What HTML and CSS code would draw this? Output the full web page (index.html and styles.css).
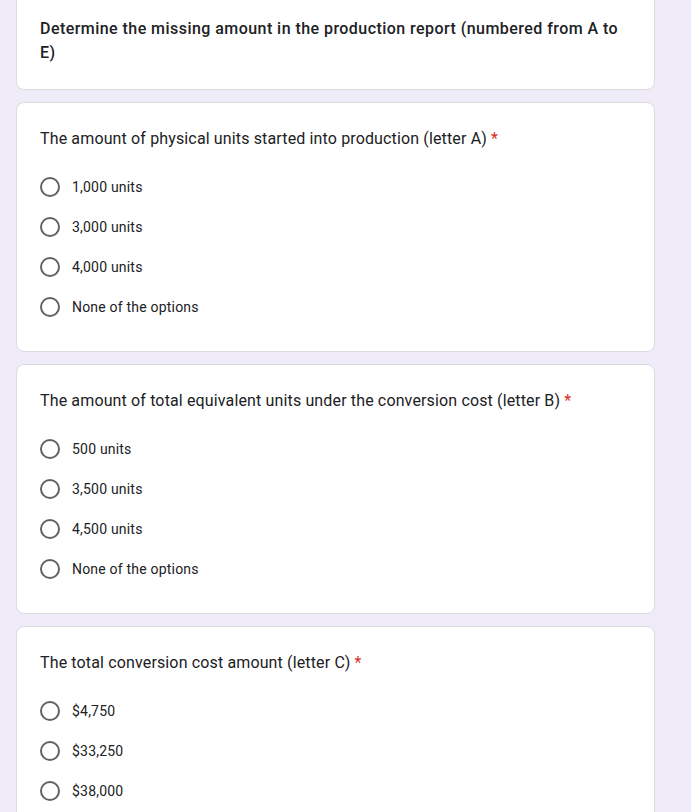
FILE: index.html
```html
<!DOCTYPE html>
<html>
<head>
<meta charset="utf-8">
<link rel="stylesheet" href="styles.css">
</head>
<body>
<div class="form">
  <div class="card card-section">
    <div class="section-title">Determine the missing amount in the production report (numbered from A to E)</div>
  </div>

  <div class="card">
    <div class="q-title">The amount of physical units started into production (letter A) <span class="req">*</span></div>
    <div class="options">
      <div class="opt"><span class="radio"></span><span class="label">1,000 units</span></div>
      <div class="opt"><span class="radio"></span><span class="label">3,000 units</span></div>
      <div class="opt"><span class="radio"></span><span class="label">4,000 units</span></div>
      <div class="opt"><span class="radio"></span><span class="label">None of the options</span></div>
    </div>
  </div>

  <div class="card">
    <div class="q-title">The amount of total equivalent units under the conversion cost (letter B) <span class="req">*</span></div>
    <div class="options">
      <div class="opt"><span class="radio"></span><span class="label">500 units</span></div>
      <div class="opt"><span class="radio"></span><span class="label">3,500 units</span></div>
      <div class="opt"><span class="radio"></span><span class="label">4,500 units</span></div>
      <div class="opt"><span class="radio"></span><span class="label">None of the options</span></div>
    </div>
  </div>

  <div class="card">
    <div class="q-title">The total conversion cost amount (letter C) <span class="req">*</span></div>
    <div class="options">
      <div class="opt"><span class="radio"></span><span class="label">$4,750</span></div>
      <div class="opt"><span class="radio"></span><span class="label">$33,250</span></div>
      <div class="opt"><span class="radio"></span><span class="label">$38,000</span></div>
    </div>
  </div>
</div>
</body>
</html>
```

FILE: styles.css
```css
html, body {
  margin: 0;
  padding: 0;
  background: #f0ebf8;
  font-family: Roboto, "Liberation Sans", Arial, sans-serif;
  color: #202124;
}

.form {
  width: 639px;
  margin: -8px 0 0 16px;
  display: flex;
  flex-direction: column;
  gap: 12px;
}

.card {
  background: #fff;
  border: 1px solid #dadce0;
  border-radius: 8px;
  padding: 24px 23px 24px 23px;
}

.section-title {
  font-size: 16px;
  line-height: 24px;
  font-weight: 500;
  letter-spacing: 0.45px;
}

.q-title {
  font-size: 16px;
  line-height: 24px;
  font-weight: 400;
  letter-spacing: 0.14px;
}

.req {
  color: #d93025;
}

.options {
  margin-top: 16px;
  display: flex;
  flex-direction: column;
}

.opt {
  display: flex;
  align-items: center;
  height: 40px;
  gap: 12px;
}

.radio {
  box-sizing: border-box;
  width: 20px;
  height: 20px;
  border: 2px solid #5f6368;
  border-radius: 50%;
  flex: none;
}

.label {
  font-size: 14px;
  line-height: 20px;
  letter-spacing: 0.2px;
}
```
